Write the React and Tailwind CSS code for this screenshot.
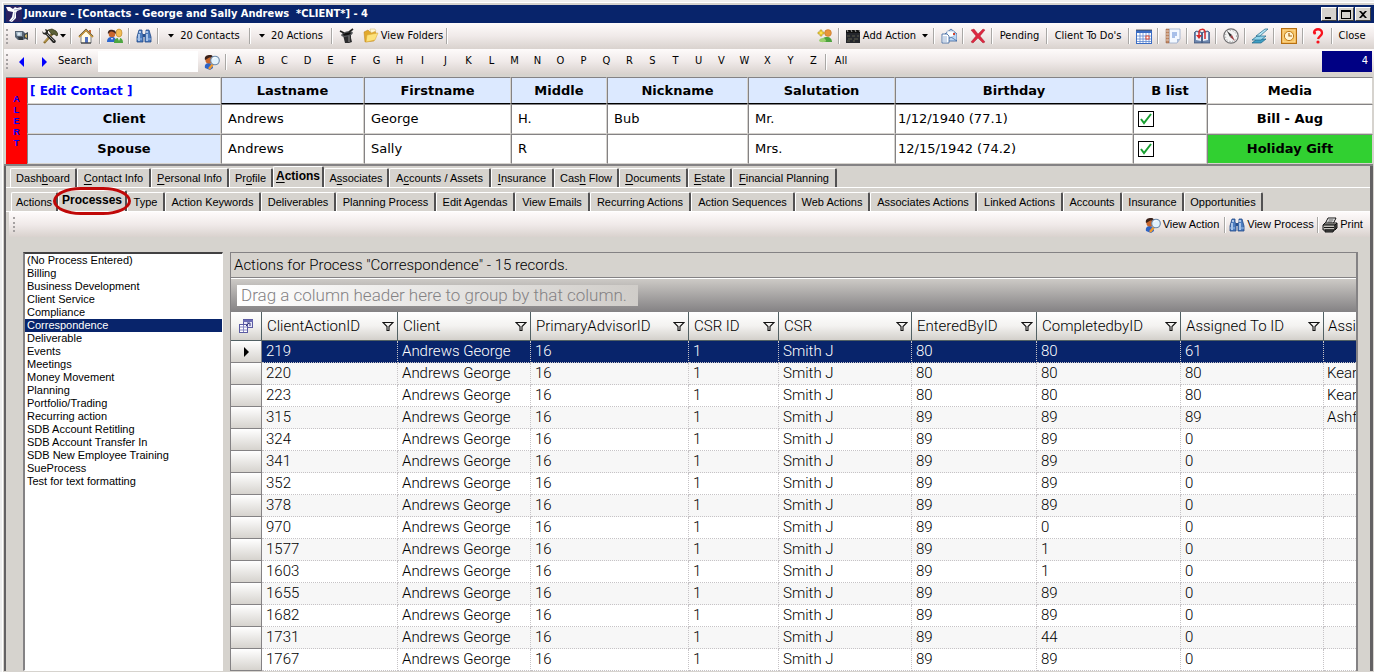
import React, { useState } from 'react';

const UI = "font-['DejaVu_Sans_Condensed','DejaVu_Sans',sans-serif] text-[11px]";
const BAR = 'bg-linear-to-b from-[#fefbfb] via-[#f0eae9] to-[#d9d2ce]';

const contacts = [
  { role: 'Client', last: 'Andrews', first: 'George', middle: 'H.', nick: 'Bub', salutation: 'Mr.', birthday: '1/12/1940 (77.1)' },
  { role: 'Spouse', last: 'Andrews', first: 'Sally', middle: 'R', nick: '', salutation: 'Mrs.', birthday: '12/15/1942 (74.2)' },
];

const mainTabs = [
  { label: 'Dashboard', key: 4, w: 'w-[67px]' },
  { label: 'Contact Info', key: 0, w: 'w-[74px]' },
  { label: 'Personal Info', key: 0, w: 'w-[78px]' },
  { label: 'Profile', key: 2, w: 'w-[44px]' },
  { label: 'Actions', key: 0, w: 'w-[51px]' },
  { label: 'Associates', key: 1, w: 'w-[65px]' },
  { label: 'Accounts / Assets', key: 1, w: 'w-[102px]' },
  { label: 'Insurance', key: 0, w: 'w-[63px]' },
  { label: 'Cash Flow', key: 3, w: 'w-[65px]' },
  { label: 'Documents', key: 0, w: 'w-[69px]' },
  { label: 'Estate', key: 0, w: 'w-[44px]' },
  { label: 'Financial Planning', key: 0, w: 'w-[105px]' },
];

const subTabs = [
  { label: 'Actions', w: 'w-[47px]' },
  { label: 'Processes', w: 'w-[69px]' },
  { label: 'Type', w: 'w-[38px]' },
  { label: 'Action Keywords', w: 'w-[96px]' },
  { label: 'Deliverables', w: 'w-[75px]' },
  { label: 'Planning Process', w: 'w-[100px]' },
  { label: 'Edit Agendas', w: 'w-[79px]' },
  { label: 'View Emails', w: 'w-[75px]' },
  { label: 'Recurring Actions', w: 'w-[101px]' },
  { label: 'Action Sequences', w: 'w-[104px]' },
  { label: 'Web Actions', w: 'w-[75px]' },
  { label: 'Associates Actions', w: 'w-[107px]' },
  { label: 'Linked Actions', w: 'w-[86px]' },
  { label: 'Accounts', w: 'w-[59px]' },
  { label: 'Insurance', w: 'w-[62px]' },
  { label: 'Opportunities', w: 'w-[79px]' },
];

const processes = [
  '(No Process Entered)', 'Billing', 'Business Development', 'Client Service', 'Compliance',
  'Correspondence', 'Deliverable', 'Events', 'Meetings', 'Money Movement', 'Planning',
  'Portfolio/Trading', 'Recurring action', 'SDB Account Retitling', 'SDB Account Transfer In',
  'SDB New Employee Training', 'SueProcess', 'Test for text formatting',
];

const columns = ['ClientActionID', 'Client', 'PrimaryAdvisorID', 'CSR ID', 'CSR', 'EnteredByID', 'CompletedbyID', 'Assigned To ID'];

// id, entered by, completed by, assigned to, assigned name
const actions = [
  [219, 80, 80, 61, ''],
  [220, 80, 80, 80, 'Kear'],
  [223, 80, 80, 80, 'Kear'],
  [315, 89, 89, 89, 'Ashf'],
  [324, 89, 89, 0, ''],
  [341, 89, 89, 0, ''],
  [352, 89, 89, 0, ''],
  [378, 89, 89, 0, ''],
  [970, 89, 0, 0, ''],
  [1577, 89, 1, 0, ''],
  [1603, 89, 1, 0, ''],
  [1655, 89, 89, 0, ''],
  [1682, 89, 89, 0, ''],
  [1731, 89, 44, 0, ''],
  [1767, 89, 89, 0, ''],
];

const Svg = ({ children, className = 'size-4' }) => (
  <svg viewBox="0 0 16 16" className={`${className} shrink-0`} aria-hidden="true">{children}</svg>
);

const Logo = () => (
  <Svg>
    <rect width="16" height="16" fill="#2a2160" />
    <path d="M0 1l4 0 3 2 2-2 2 1 4-1 1 2-5 2-1 2 0 5-4 4-3-1 3-4 1-5-5-1z" fill="#fff" />
    <path d="M9 6l-1 6-3 3M8 4l6-1" stroke="#9aa0c4" strokeWidth=".8" fill="none" />
  </Svg>
);

const CameraIcon = () => (
  <Svg>
    <path d="M1 3h8l2 2v6l-2 1H4L1 9z" fill="#566474" />
    <path d="M2 4h6v4H3z" fill="#a9bccb" />
    <circle cx="5" cy="6" r="1.5" fill="#dfeaf2" />
    <path d="M10 6l4-2v8l-4-2z" fill="#39434c" />
    <path d="M11 7l2-1v4l-2-1z" fill="#c8ae62" />
    <path d="M4 9h5v3H5z" fill="#2f3840" />
  </Svg>
);

const ToolsIcon = () => (
  <Svg>
    <path d="M2 15L11 5" stroke="#8a6c28" strokeWidth="2.400" />
    <path d="M2.500 14L10 6" stroke="#e0c070" strokeWidth=".8" />
    <path d="M6 2l4-1 4 2 2 3-1 2-3-2-2 1-2-3z" fill="#5d6136" stroke="#26280f" strokeWidth=".7" />
    <path d="M0 3l2 2 2-1-1-3 3 1v3l8 8-1 2-2 0-7-8-3-1z" fill="#2a2a28" />
    <path d="M5 6l7 7" stroke="#b5b5ae" strokeWidth=".8" />
  </Svg>
);

const HomeIcon = () => (
  <Svg>
    <path d="M3 8l5-5 5 5v7H3z" fill="#fffbe8" stroke="#5b6270" strokeWidth=".8" />
    <path d="M11 2h2v4l-2-2z" fill="#c96d3c" />
    <path d="M1 9l7-7 7 7" stroke="#c6963a" strokeWidth="2" fill="none" />
    <path d="M1 8l7-7 7 7" stroke="#474d55" strokeWidth=".7" fill="none" />
    <rect x="7" y="9" width="3" height="6" fill="#5273c1" />
    <path d="M3 15h10" stroke="#333" />
  </Svg>
);

const PeopleIcon = () => (
  <Svg>
    <path d="M0 14c0-4 2-5 5-5s4 2 4 5z" fill="#2c66cf" />
    <path d="M7 15c0-4 2-5 5-5s4 2 4 5z" fill="#4ea642" />
    <ellipse cx="12" cy="5" rx="3" ry="4" fill="#f2bd55" stroke="#b37d20" strokeWidth=".6" />
    <circle cx="5" cy="6" r="3.3" fill="#c9662d" />
    <path d="M1 6c-1-4 3-5 5-4 3 0 3 3 3 4-2-2-4-3-6-2z" fill="#40241b" />
    <path d="M4 10l1 2 1-2M11 10l1 3 1-3" fill="#fff" />
  </Svg>
);

const BinocularsIcon = () => (
  <Svg>
    <path d="M3 2h3v3l1 2v7H1V9z" fill="#4d7dbf" stroke="#1f4788" strokeWidth=".8" />
    <path d="M10 2h3l2 7v5H9V7l1-2z" fill="#4d7dbf" stroke="#1f4788" strokeWidth=".8" />
    <path d="M7 6h2v3H7z" fill="#29508c" />
    <path d="M3 6v7M11 6v7M4 3v2M11 3v2" stroke="#dcebff" strokeWidth="1.3" />
    <path d="M1 11h5M10 11h5" stroke="#9dbfe9" />
  </Svg>
);

const HatIcon = () => (
  <Svg>
    <path d="M4 7l8-1 0 4 1 4-3 1-4 0z" fill="#2c2c2e" />
    <ellipse cx="8" cy="6" rx="6" ry="2.600" fill="#55575b" transform="rotate(-14 8 6)" />
    <ellipse cx="8" cy="6" rx="4" ry="1.300" fill="#111" transform="rotate(-14 8 6)" />
    <path d="M1 3l4 2M10 4l4-3" stroke="#222" strokeWidth="1.600" />
    <path d="M10 8v6" stroke="#8d8d8d" />
  </Svg>
);

const FolderIcon = () => (
  <Svg>
    <path d="M1 4l4-2 2 2 5-1 1 2-2 8-9 1z" fill="#e2a92c" stroke="#b8811b" strokeWidth=".5" />
    <path d="M4 7l11-2-3 7-9 2z" fill="#fde27a" stroke="#d9a736" strokeWidth=".5" />
    <path d="M7 1h5l1 2-5 2z" fill="#fff8d8" stroke="#c8a650" strokeWidth=".4" />
  </Svg>
);

const PersonSearchIcon = () => (
  <Svg>
    <path d="M1 14c-1-4 2-5 4-5s4 2 4 5l-3 2z" fill="#2d63c6" />
    <circle cx="5" cy="6" r="3.6" fill="#c9662d" />
    <path d="M1 6c-1-4 2-5 5-5 3 0 3 2 3 3-3-1-5 0-6 1z" fill="#3a2018" />
    <path d="M9 10l-4 5" stroke="#f09a2e" strokeWidth="2.4" />
    <circle cx="11" cy="6.500" r="4.300" fill="#e2f2fd" stroke="#6a88aa" strokeWidth="1.1" />
    <path d="M9 5c1-1 2-2 3-1" stroke="#fff" fill="none" />
  </Svg>
);

const AddPersonIcon = () => (
  <Svg>
    <path d="M5 14c0-4 2-5 5-5s5 2 5 5z" fill="#4da33e" />
    <circle cx="11" cy="5" r="3.4" fill="#e9963b" stroke="#b86a1f" strokeWidth=".5" />
    <path d="M2 13c0-2 2-3 4-3s3 2 3 3-5 2-7 0z" fill="#9ad06f" />
    <path d="M3 2h2v2h2v2H5v2H3V6H1V4h2z" fill="#ffe14b" stroke="#a88912" strokeWidth=".6" />
  </Svg>
);

const ClapperIcon = () => (
  <Svg>
    <rect x="1" y="5" width="14" height="10" fill="#24262c" />
    <path d="M1 2h14v3H1z" fill="#111" />
    <path d="M2 2l1 2M6 2l1 2M10 2l1 2M14 2l1 2" stroke="#ccc" strokeWidth=".8" />
    <path d="M2 8h3M7 8h3M12 8h2M3 11h4M9 11h4M2 13h3M8 13h2" stroke="#77765a" strokeWidth=".7" />
  </Svg>
);

const MailIcon = () => (
  <Svg>
    <path d="M4 6l6-5 6 5v7H4z" fill="#bcd6f3" stroke="#35609c" strokeWidth=".8" />
    <path d="M6 3h7v5l-4 2-3-2z" fill="#fff" stroke="#7c9cc6" strokeWidth=".5" />
    <path d="M4 13l6-4 6 4" stroke="#35609c" strokeWidth=".7" fill="none" />
    <rect x="12" y="5" width="2" height="2" fill="#d4412c" />
    <path d="M1 6h5l2 2v7H1z" fill="#fff" stroke="#35609c" strokeWidth=".8" />
    <path d="M2 9h4M2 11h4M2 13h4" stroke="#7ea0cc" strokeWidth=".8" />
  </Svg>
);

const DeleteIcon = () => (
  <Svg>
    <path d="M1 2l3-1 4 5 5-5 2 1-5 6 5 6-2 1-5-5-5 5-2-1 5-6z" fill="#dd2740" stroke="#9c1324" strokeWidth=".4" />
  </Svg>
);

const CalendarIcon = () => (
  <Svg>
    <rect x=".5" y="2.500" width="15" height="13" fill="#fff" stroke="#3a6cc4" />
    <path d="M1 3h14v2H1z" fill="#3a6cc4" />
    <path d="M1 8h14M1 11h14M1 13.500h14M4 5v10M7 5v10M10 5v10M13 5v10" stroke="#5c86d2" strokeWidth=".8" />
    <path d="M1 1v2M3 1v2M5 1v2M7 1v2M9 1v2M11 1v2M13 1v2M15 1v2" stroke="#444" strokeWidth=".8" />
    <rect x="10" y="8" width="3" height="3" fill="#fff" stroke="#e0442c" />
  </Svg>
);

const NotebookIcon = () => (
  <Svg>
    <path d="M4 1h11v10l-3 4H4z" fill="#f3f8ff" stroke="#8aa0c4" strokeWidth=".7" />
    <path d="M1 1h3v14H1z" fill="#c48a66" stroke="#8d5b3d" strokeWidth=".5" />
    <path d="M7 5h5M7 7h5M7 9h3" stroke="#5c86d2" />
    <path d="M12 15v-4h3z" fill="#a9bbd8" />
    <path d="M1 3h3M1 6h3M1 9h3M1 12h3" stroke="#fff" strokeWidth=".6" />
  </Svg>
);

const BookIcon = () => (
  <Svg>
    <path d="M0 5l2-2 5 1 1 1 1-1 5-1 2 2v10H0z" fill="#6d86ad" stroke="#33496f" strokeWidth=".7" />
    <path d="M2 4l5 1v8l-5-1zM14 4l-5 1v8l5-1z" fill="#e9f1fb" />
    <path d="M8 5v10" stroke="#33496f" />
    <path d="M5 8V4c0-3 6-4 6 0v7" stroke="#d62a2a" strokeWidth="1.500" fill="none" />
    <path d="M2 7h6l-3 4z" fill="#d62a2a" />
  </Svg>
);

const CompassIcon = () => (
  <Svg>
    <circle cx="8" cy="8" r="7.200" fill="#f4f4f4" stroke="#6e6e70" strokeWidth="1.200" />
    <circle cx="8" cy="8" r="5.500" fill="none" stroke="#999" strokeWidth="1" strokeDasharray="1 2" />
    <path d="M4 3l5 4-2 2z" fill="#333" />
    <path d="M12 13L7 9l2-2z" fill="#9b4044" />
  </Svg>
);

const PagesIcon = () => (
  <Svg>
    <path d="M0 15l5-4h9l-5 4z" fill="#3f9fc4" stroke="#1d6688" strokeWidth=".7" />
    <path d="M0 12l5-4h9l-5 4z" fill="#8fd3ea" stroke="#1d6688" strokeWidth=".7" />
    <path d="M4 8l9-7h3l-8 7z" fill="#b5e6f5" stroke="#1d6688" strokeWidth=".7" />
  </Svg>
);

const ClockIcon = () => (
  <Svg>
    <rect x=".5" y=".5" width="15" height="15" fill="#f0a93c" stroke="#b56f12" />
    <rect x="2" y="2" width="12" height="12" fill="#f7c462" stroke="#fde6b0" strokeWidth=".7" />
    <circle cx="8" cy="8" r="4.600" fill="#fff4d2" stroke="#c07a1a" />
    <path d="M8 5v3h3" stroke="#a8600c" strokeWidth="1.200" fill="none" />
  </Svg>
);

const HelpIcon = () => (
  <Svg>
    <path d="M4 5c0-5 8-5 8 0 0 3-3 3-4 6" stroke="#f8121c" strokeWidth="2.300" fill="none" />
    <circle cx="4.600" cy="5" r="1.500" fill="#f8121c" />
    <circle cx="8" cy="14" r="1.600" fill="#f8121c" />
  </Svg>
);

const PrinterIcon = () => (
  <Svg>
    <path d="M6 1h8l-3 6H3z" fill="#fff" stroke="#111" />
    <path d="M6.500 3h5M5.500 5h5" stroke="#111" strokeWidth=".8" />
    <path d="M1 8l2-2h12l-2 2z" fill="#d6d3ce" stroke="#111" />
    <path d="M1 8h12v5H1z" fill="#c5c2bd" stroke="#111" />
    <path d="M13 8l2-2v5l-2 2zM3 13h9l-1 2H3z" fill="#555" stroke="#111" />
    <path d="M2 10.500h10" stroke="#111" />
  </Svg>
);

const ChooserIcon = () => (
  <Svg>
    <rect x="5.500" y="1.500" width="9" height="8" fill="#e6e6f8" stroke="#5b5ba2" />
    <path d="M5 2h10v2H5z" fill="#6b6bb4" />
    <rect x="1.500" y="6.500" width="8" height="8" fill="#fff" stroke="#5b5ba2" />
    <path d="M2 9h7M2 12h7M5.500 7v7" stroke="#8484c2" />
    <path d="M8 8l3-3M9 5h3v3" stroke="#33337a" fill="none" />
  </Svg>
);

const FilterIcon = () => (
  <svg viewBox="0 0 12 10" className="h-[10px] w-3 shrink-0" aria-hidden="true">
    <path d="M1 1.500h10L7 5.500v4H5v-4z" fill="none" stroke="#111" strokeWidth="1.100" />
  </svg>
);

const Caret = () => (
  <svg viewBox="0 0 6 4" className="h-1 w-1.5 shrink-0" aria-hidden="true"><path d="M0 0h6L3 3.500z" /></svg>
);

const Sep = () => (
  <span className="h-4 w-0.5 shrink-0 border-l border-r border-l-[#a9a7a5] border-r-white" />
);

const Grip = () => (
  <span className="h-[15px] w-0.5 shrink-0 border-l-2 border-dotted border-[#a5a1a1]" />
);

const ToolButton = ({ label, className, children }) => (
  <button type="button" aria-label={label} className={`flex h-full shrink-0 items-center justify-center gap-0.5 whitespace-nowrap ${className}`}>
    {children}
  </button>
);

const TitleBar = () => (
  <header className="flex h-[18px] items-center bg-[#08246b] pr-[3px] pl-0.5 text-white">
    <Logo />
    <h1 className="ml-0.5 flex-1 font-['DejaVu_Sans_Condensed',sans-serif] text-[11px] font-bold whitespace-pre">
      {'Junxure - [Contacts - George and Sally Andrews  *CLIENT*] - 4'}
    </h1>
    <div className="flex gap-px">
      {[
        ['Minimize', 'M3 9h6v2H3z'],
        ['Maximize', 'M2 2h10v9H2zM3 4v6h8V4z'],
        ['Close window', 'M3 3h2l2 2 2-2h2L8 6.500 11 10H9L7 8l-2 2H3l3-3.500z'],
      ].map(([label, d]) => (
        <button key={label} type="button" aria-label={label} className="flex h-3.5 w-4 items-center justify-center border border-t-white border-l-white border-r-[#404040] border-b-[#404040] bg-[#d6d3ce]">
          <svg viewBox="0 0 14 13" className="h-[13px] w-3.5"><path d={d} fillRule="evenodd" /></svg>
        </button>
      ))}
    </div>
  </header>
);

const MainToolbar = () => (
  <div className={`flex h-[26px] items-center pr-[3px] pl-0.5 ${BAR} ${UI}`}>
    <Grip />
    <ToolButton label="Camera" className="w-[27px]"><CameraIcon /></ToolButton>
    <Sep />
    <ToolButton label="Tools" className="w-[33px]"><ToolsIcon /><Caret /></ToolButton>
    <Sep />
    <ToolButton label="Home" className="w-[27px]"><HomeIcon /></ToolButton>
    <Sep />
    <ToolButton label="People" className="w-[27px]"><PeopleIcon /></ToolButton>
    <Sep />
    <ToolButton label="Find" className="w-[27px]"><BinocularsIcon /></ToolButton>
    <Sep />
    <ToolButton className="w-[90px]"><Caret /><span className="pl-1">20 Contacts</span></ToolButton>
    <Sep />
    <ToolButton className="w-[80px]"><Caret /><span className="pl-1">20 Actions</span></ToolButton>
    <Sep />
    <ToolButton label="Wizard" className="w-[27px]"><HatIcon /></ToolButton>
    <ToolButton className="w-[86px]"><FolderIcon />View Folders</ToolButton>
    <Sep />
    <div className="flex-1" />
    <ToolButton label="Add person" className="w-[27px]"><AddPersonIcon /></ToolButton>
    <Sep />
    <ToolButton className="w-[93px]"><ClapperIcon />Add Action<span className="pl-1"><Caret /></span></ToolButton>
    <Sep />
    <ToolButton label="Mail" className="w-[27px]"><MailIcon /></ToolButton>
    <Sep />
    <ToolButton label="Delete" className="w-[27px]"><DeleteIcon /></ToolButton>
    <Sep />
    <ToolButton className="w-[53px]">Pending</ToolButton>
    <Sep />
    <ToolButton className="w-[80px]">Client To Do's</ToolButton>
    <Sep />
    <ToolButton label="Calendar" className="w-[27px]"><CalendarIcon /></ToolButton>
    <Sep />
    <ToolButton label="Notes" className="w-[27px]"><NotebookIcon /></ToolButton>
    <Sep />
    <ToolButton label="Library" className="w-[27px]"><BookIcon /></ToolButton>
    <Sep />
    <ToolButton label="Compass" className="w-[27px]"><CompassIcon /></ToolButton>
    <Sep />
    <ToolButton label="Pages" className="w-[27px]"><PagesIcon /></ToolButton>
    <Sep />
    <ToolButton label="Time" className="w-[27px]"><ClockIcon /></ToolButton>
    <Sep />
    <ToolButton label="Help" className="w-[27px]"><HelpIcon /></ToolButton>
    <Sep />
    <ToolButton className="w-[38px]">Close</ToolButton>
  </div>
);

const SearchBar = () => (
  <div className={`flex h-[25px] items-center pr-0.5 pl-0.5 ${BAR} ${UI}`}>
    <Grip />
    <ToolButton label="Previous" className="w-[27px]">
      <svg viewBox="0 0 5 10" className="h-2.5 w-[5px]"><path d="M5 0v10L0 5z" fill="#00f" /></svg>
    </ToolButton>
    <ToolButton label="Next" className="w-[19px]">
      <svg viewBox="0 0 5 10" className="h-2.5 w-[5px]"><path d="M0 0v10l5-5z" fill="#00f" /></svg>
    </ToolButton>
    <label htmlFor="search" className="w-[44px] shrink-0 pl-1">Search</label>
    <input id="search" type="text" className="h-[21px] w-[100px] shrink-0 bg-white px-1 outline-none" />
    <ToolButton label="Find person" className="w-[27px]"><PersonSearchIcon /></ToolButton>
    <Sep />
    {'ABCDEFGHIJKLMNOPQRSTUVWXYZ'.split('').map((letter) => (
      <ToolButton key={letter} className="w-[23px]">{letter}</ToolButton>
    ))}
    <Sep />
    <ToolButton className="w-[28px]">All</ToolButton>
    <div className="flex-1" />
    <output className="flex h-[21px] w-[50px] items-center justify-end bg-[#000084] pr-1 text-white">4</output>
  </div>
);

const ContactHeader = () => {
  const [blist, setBlist] = useState([true, true]);
  const cell = 'border border-t-[#848284] border-l-[#848284] border-r-[#d6d3ce] border-b-[#d6d3ce]';
  return (
    <div className="flex border-b-2 border-[#848284] pl-0.5 font-['DejaVu_Sans',sans-serif] text-[13px]">
      <div className="flex w-[21px] shrink-0 flex-col items-center justify-center border-t border-[#848284] bg-[#f00] font-['Liberation_Sans',sans-serif] text-[9px] leading-[11px] font-bold text-[#00f]">
        {'ALERT'.split('').map((c) => <span key={c}>{c}</span>)}
      </div>
      <table className="w-full table-fixed border-separate border-spacing-0 bg-white">
        <colgroup>
          <col className="w-[194px]" /><col className="w-[143px]" /><col className="w-[147px]" />
          <col className="w-[96px]" /><col className="w-[141px]" /><col className="w-[147px]" />
          <col className="w-[238px]" /><col className="w-[74px]" /><col />
        </colgroup>
        <thead>
          <tr className="h-[27px]">
            <th className={`${cell} pl-0.5 text-left text-[12px]`}>
              <a href="#edit" className="text-[#00f]">[ Edit Contact ]</a>
            </th>
            {['Lastname', 'Firstname', 'Middle', 'Nickname', 'Salutation', 'Birthday', 'B list'].map((h) => (
              <th key={h} className="border border-t-[#848284] border-r-[#d6d3ce] border-b-black border-l-[#848284] bg-[#dce9ff]">{h}</th>
            ))}
            <th className={cell}>Media</th>
          </tr>
        </thead>
        <tbody>
          {contacts.map((c, i) => (
            <tr key={c.role} className="h-[30px]">
              <th className={`${cell} bg-[#dce9ff]`}>{c.role}</th>
              {[c.last, c.first, c.middle, c.nick, c.salutation].map((v, j) => (
                <td key={j} className={`${cell} pl-1.5`}>{v}</td>
              ))}
              <td className={`${cell} pl-0.5`}>{c.birthday}</td>
              <td className={`${cell} pl-1`}>
                <label className="grid size-4">
                  <input
                    type="checkbox"
                    aria-label={`${c.role} B list`}
                    checked={blist[i]}
                    onChange={() => setBlist(blist.map((b, k) => (k === i ? !b : b)))}
                    className="peer col-start-1 row-start-1 size-4 appearance-none border border-black bg-white"
                  />
                  <svg viewBox="0 0 16 16" className="pointer-events-none invisible col-start-1 row-start-1 size-4 peer-checked:visible">
                    <path d="M3 8l3 4 7-9" stroke="#18a030" strokeWidth="2" fill="none" />
                  </svg>
                </label>
              </td>
              <td className={`${cell} text-center font-bold ${i === 1 ? 'bg-[#31d031]' : ''}`}>
                {i === 0 ? 'Bill - Aug' : 'Holiday Gift'}
              </td>
            </tr>
          ))}
        </tbody>
      </table>
    </div>
  );
};

const TAB = 'relative shrink-0 whitespace-nowrap rounded-t-[2px] border-t border-l border-r-2 border-t-white border-l-white border-r-[#525152] bg-[#d6d3ce] text-center';

const Tab = ({ tab, active, onSelect, circled }) => {
  const { label, key, w } = tab;
  return (
    <button
      type="button"
      role="tab"
      aria-selected={active}
      onClick={onSelect}
      className={`${TAB} ${w} ${active ? 'z-10 h-[21px] pb-1 text-[12px] font-bold' : 'h-[19px]'}`}
    >
      {key === undefined ? label : (
        <>{label.slice(0, key)}<span className="underline underline-offset-2">{label[key]}</span>{label.slice(key + 1)}</>
      )}
      {circled && (
        <span className="absolute -top-1 -right-1.5 -left-1.5 h-7 rounded-[28px/14px] border-3 border-[#c00808]" />
      )}
    </button>
  );
};

const Tabs = () => {
  const [main, setMain] = useState('Actions');
  const [sub, setSub] = useState('Processes');
  return (
    <nav className="font-['Liberation_Sans',sans-serif] text-[11px]">
      <div role="tablist" className="flex h-[22px] items-end border-b border-white pl-1">
        {mainTabs.map((t) => <Tab key={t.label} tab={t} active={t.label === main} onSelect={() => setMain(t.label)} />)}
      </div>
      <div role="tablist" className="flex h-6 items-end border-b border-white pl-[5px]">
        {subTabs.map((t) => (
          <Tab key={t.label} tab={t} active={t.label === sub} circled={t.label === 'Processes'} onSelect={() => setSub(t.label)} />
        ))}
      </div>
    </nav>
  );
};

const ProcessList = () => {
  const [selected, setSelected] = useState('Correspondence');
  return (
    <ul role="listbox" aria-label="Processes" className="w-[200px] shrink-0 border border-t-2 border-l-2 border-t-[#424142] border-r-white border-b-white border-l-[#848284] bg-white">
      {processes.map((p) => (
        <li key={p} role="option" aria-selected={p === selected}>
          <button
            type="button"
            onClick={() => setSelected(p)}
            className={`block h-[13px] w-full pl-0.5 text-left font-['Liberation_Sans',sans-serif] text-[11px] leading-[13px] whitespace-nowrap ${p === selected ? 'bg-[#08246b] text-white' : ''}`}
          >
            {p}
          </button>
        </li>
      ))}
    </ul>
  );
};

const HEAD = 'h-[29px] border-r border-b border-r-[#526164] border-b-[#526164] bg-linear-to-b from-white via-[#f3f2f0] to-[#d3d0cb] p-0 font-light';

const ActionsGrid = () => (
  <section className="min-w-0 flex-1 border-t border-r-2 border-l border-[#848284] font-[Roboto,sans-serif] text-[15px] font-light">
    <h2 className="h-[25px] border-b border-[#848284] pl-[3px] leading-[25px]">
      Actions for Process "Correspondence" - 15 records.
    </h2>
    <div className="flex h-[34px] items-center border-t border-white bg-linear-to-b from-[#cdcac6] to-[#848284] pl-1.5">
      <span className="h-[21px] w-[401px] bg-linear-to-r from-white to-[#d0cdc9] pl-1 text-[17px] leading-[21px] whitespace-nowrap text-[#848284]">
        Drag a column header here to group by that column.
      </span>
    </div>
    <table className="w-full table-fixed border-separate border-spacing-0 overflow-hidden bg-white">
      <colgroup>
        <col className="w-[31px]" /><col className="w-[136px]" /><col className="w-[133px]" />
        <col className="w-[158px]" /><col className="w-[90px]" /><col className="w-[133px]" />
        <col className="w-[125px]" /><col className="w-[144px]" /><col className="w-[143px]" /><col />
      </colgroup>
      <thead>
        <tr>
          <th className={HEAD}>
            <button type="button" aria-label="Choose columns" className="flex w-full items-center justify-center"><ChooserIcon /></button>
          </th>
          {columns.map((c) => (
            <th key={c} className={HEAD}>
              <div className="flex items-center justify-between pr-[3px] pl-[5px]">
                <span className="whitespace-nowrap">{c}</span>
                <button type="button" aria-label={`Filter ${c}`}><FilterIcon /></button>
              </div>
            </th>
          ))}
          <th className={`${HEAD} overflow-hidden border-r-0 pl-1 text-left`}>Assi</th>
        </tr>
      </thead>
      <tbody>
        {actions.map(([id, entered, completed, assigned, name], i) => (
          <tr key={id} className={i === 0 ? 'bg-[#08246b] text-white' : i % 2 ? 'bg-[#f7f7f7]' : 'bg-white'}>
            <td className="h-[22px] border-r border-b border-[#848284] bg-linear-to-b from-white to-[#d6d3ce] p-0">
              {i === 0 && (
                <svg viewBox="0 0 5 10" className="mx-auto h-2.5 w-[5px]" aria-label="Current row"><path d="M0 0v10l5-5z" /></svg>
              )}
            </td>
            {[id, 'Andrews George', 16, 1, 'Smith J', entered, completed, assigned].map((v, j) => (
              <td key={j} className="h-[22px] border-r border-b border-dotted border-[#c6c3c6] py-0 pr-0 pl-1 leading-[21px] whitespace-nowrap">{v}</td>
            ))}
            <td className="h-[22px] overflow-hidden border-b border-dotted border-[#c6c3c6] py-0 pr-0 pl-[3px] leading-[21px]">{name}</td>
          </tr>
        ))}
      </tbody>
    </table>
  </section>
);

export default function App() {
  return (
    <div className="h-screen overflow-hidden border-t-2 border-l-2 border-[#efefef] bg-[#d6d3ce] text-black">
      <div className="h-full border-t border-l border-white pt-0.5 pl-px">
        <TitleBar />
        <MainToolbar />
        <SearchBar />
        <div className="mt-[3px] pr-px">
          <ContactHeader />
          <div className="border-r-3 border-l-2 border-[#636163]">
            <Tabs />
            <div className={`ml-[3px] flex h-[25px] items-center justify-end pr-1 pl-1 ${BAR} font-['Liberation_Sans',sans-serif] text-[11px]`}>
              <Grip />
              <div className="flex-1" />
              <ToolButton className="w-[84px]"><PersonSearchIcon />View Action</ToolButton>
              <Sep />
              <ToolButton className="w-[91px]"><BinocularsIcon />View Process</ToolButton>
              <Sep />
              <ToolButton className="w-[47px]"><PrinterIcon />Print</ToolButton>
            </div>
            <div className="flex gap-[7px] pt-[15px] pr-3 pl-[17px]">
              <ProcessList />
              <ActionsGrid />
            </div>
          </div>
        </div>
      </div>
    </div>
  );
}
